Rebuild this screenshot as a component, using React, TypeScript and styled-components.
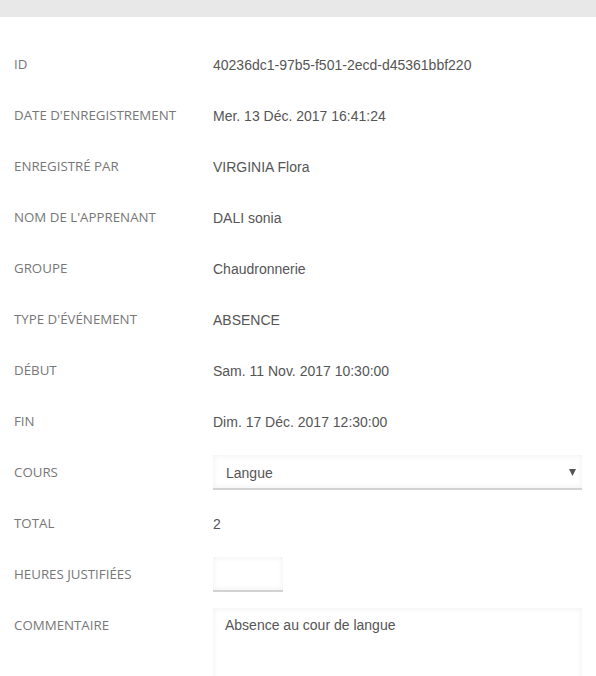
import React from "react";
import styled, { createGlobalStyle } from "styled-components";

const Global = createGlobalStyle`
  html, body { margin: 0; padding: 0; background: #fff; }
  * { box-sizing: border-box; }
`;

const Page = styled.div`
  width: 596px;
  height: 676px;
  overflow: hidden;
  background: #fff;
`;

const TopBar = styled.div`
  height: 17px;
  background: #e8e8e8;
`;

const Form = styled.div`
  display: flex;
  flex-direction: column;
  gap: 16px;
  padding: 30px 14px 0 14px;
`;

const Row = styled.div`
  display: grid;
  grid-template-columns: 199px 1fr;
  align-items: start;
  min-height: 35px;
`;

const Label = styled.div`
  font-family: "Open Sans", sans-serif;
  font-size: 13.3px;
  text-transform: uppercase;
  color: #777;
  line-height: 35px;
  white-space: nowrap;
`;

const Value = styled.div`
  font-family: "Liberation Sans", Arial, sans-serif;
  font-size: 14px;
  color: #555;
  height: 35px;
  line-height: 33px;
  padding-top: 2px;
`;

const fieldBase = `
  background: #fff;
  border: none;
  border-bottom: 2px solid #d2d2d2;
  box-shadow: inset 0 0 6px rgba(0, 0, 0, 0.07);
  font-family: "Liberation Sans", Arial, sans-serif;
  font-size: 14px;
  color: #555;
`;

const Select = styled.div`
  ${fieldBase}
  height: 35px;
  display: flex;
  align-items: center;
  justify-content: space-between;
  padding: 2px 6px 0 13px;
`;

const Arrow = styled.svg`
  width: 7px;
  height: 7px;
  fill: #555;
`;

const SmallInput = styled.div<{ $w: number }>`
  ${fieldBase}
  width: ${(p) => p.$w}px;
  height: 35px;
`;

const TextArea = styled.div`
  ${fieldBase}
  border-bottom: none;
  height: 80px;
  padding: 9px 12px;
  line-height: 16px;
`;

const rows: [string, string][] = [
  ["ID", "40236dc1-97b5-f501-2ecd-d45361bbf220"],
  ["Date d'enregistrement", "Mer. 13 Déc. 2017 16:41:24"],
  ["Enregistré par", "VIRGINIA Flora"],
  ["Nom de l'apprenant", "DALI sonia"],
  ["Groupe", "Chaudronnerie"],
  ["Type d'événement", "ABSENCE"],
  ["Début", "Sam. 11 Nov. 2017 10:30:00"],
  ["Fin", "Dim. 17 Déc. 2017 12:30:00"],
];

export default function App() {
  return (
    <Page>
      <Global />
      <TopBar />
      <Form>
        {rows.map(([l, v]) => (
          <Row key={l}>
            <Label>{l}</Label>
            <Value>{v}</Value>
          </Row>
        ))}
        <Row>
          <Label>Cours</Label>
          <Select>
            <span>Langue</span>
            <Arrow viewBox="0 0 7 7">
              <polygon points="0,0 7,0 3.5,7" />
            </Arrow>
          </Select>
        </Row>
        <Row>
          <Label>Total</Label>
          <Value>2</Value>
        </Row>
        <Row>
          <Label>Heures justifiées</Label>
          <SmallInput $w={70} />
        </Row>
        <Row>
          <Label>Commentaire</Label>
          <TextArea>Absence au cour de langue</TextArea>
        </Row>
      </Form>
    </Page>
  );
}
